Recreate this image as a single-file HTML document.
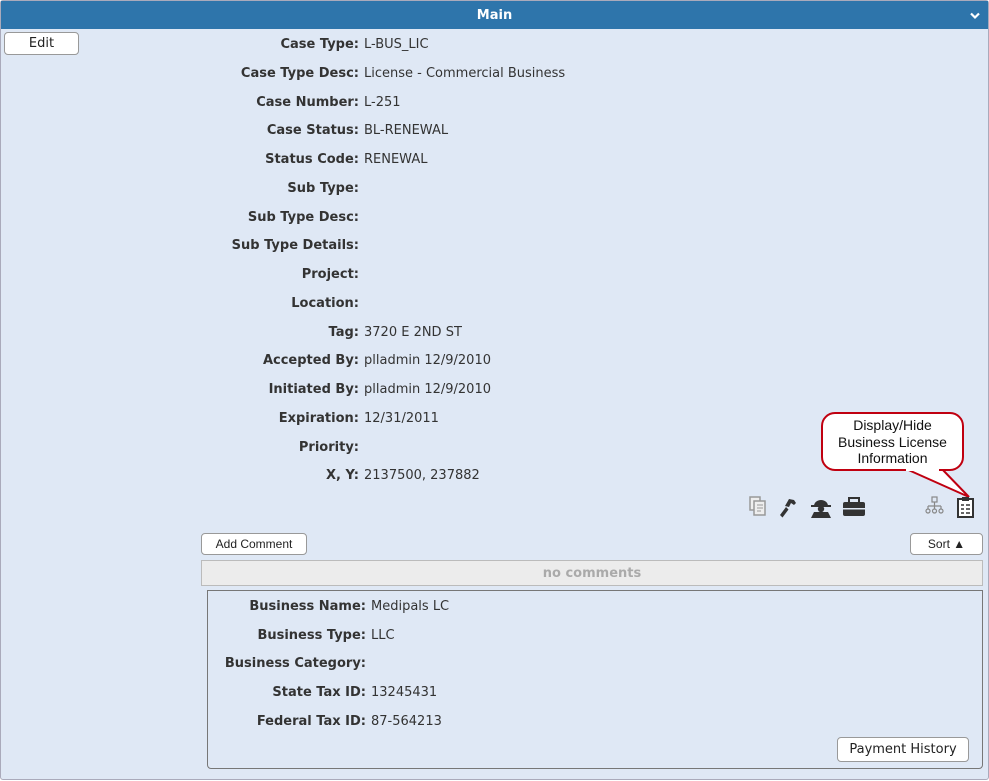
<!DOCTYPE html>
<html><head><style>
*{margin:0;padding:0;box-sizing:border-box}
body{width:989px;height:780px;background:#fff;font-family:"DejaVu Sans","Liberation Sans",sans-serif;font-size:13px;color:#333;position:relative;overflow:hidden}
.frame{position:absolute;left:0;top:0;width:989px;height:780px;background:#dfe8f5;border:1px solid #aab;border-radius:3px}
.hdr{position:absolute;left:1px;top:1px;width:987px;height:28px;background:#2e75ab;color:#fff;font-weight:bold;font-size:13px;text-align:center;line-height:30px}
.btn{position:absolute;background:#fff;border:1px solid #999;border-radius:4px;text-align:center;color:#222}
.f{position:absolute;left:0;height:16px;line-height:16px;white-space:nowrap}
.f b{position:absolute;right:0;white-space:nowrap;color:#333}
.v{position:absolute;white-space:nowrap;height:16px;line-height:16px}
.callout{position:absolute;left:821px;top:412px;width:143px;height:59px;background:#fff;border:2px solid #c00010;border-radius:14px;font-family:"Liberation Sans",sans-serif;font-size:14px;color:#111;text-align:center;line-height:16.5px;padding-top:3px}
.d{position:absolute;left:0;top:1px;width:989px;height:780px}
</style></head><body>
<div class="frame"></div>
<div class="hdr">Main<svg style="position:absolute;right:8px;top:11px" width="10" height="8"><path d="M1 1.5l4 4 4-4" fill="none" stroke="#fff" stroke-width="2.2"/></svg></div>
<div class="btn" style="left:4px;top:32px;width:75px;height:23px;line-height:22px;font-size:13px">Edit</div>

<svg style="position:absolute;left:0;top:0" width="989" height="780">
<polygon points="904,468 941,468 969,497" fill="#fff" stroke="#c00010" stroke-width="2"/>
<g><rect x="750" y="497" width="10" height="13" fill="#eee" stroke="#999" stroke-width="1.5"/><rect x="754" y="501" width="11" height="14" fill="#eee" stroke="#999" stroke-width="1.5"/><path d="M757 505h6M757 508h6M757 511h4" stroke="#999"/></g>
<path d="M780 515l6-8 2.5 2.5-6 8zM785 506l4-7 5 1 2 3-2 2-3-2-2 4z" fill="#333"/>
<g fill="#333"><path d="M814 506a7 6 0 0 1 14 0z"/><rect x="811" y="505" width="20" height="2"/><circle cx="821" cy="509" r="3.2"/><path d="M811 518l3-6h14l3 6z"/></g>
<g fill="#333"><rect x="843" y="502" width="22" height="14" rx="2"/><rect x="849" y="498" width="10" height="5" fill="none" stroke="#333" stroke-width="2"/><rect x="843" y="508" width="22" height="1.5" fill="#dfe8f5"/></g>
<g fill="none" stroke="#888" stroke-width="1.2"><rect x="932" y="497" width="5" height="5"/><path d="M934.5 502v4M928 506h13M928 506v3M934.5 506v3M941 506v3"/><circle cx="928" cy="511" r="2"/><circle cx="934.5" cy="511" r="2"/><circle cx="941" cy="511" r="2"/></g>
<g><rect x="958" y="499" width="15" height="18" fill="#fff" stroke="#333" stroke-width="2"/><rect x="962" y="497" width="7" height="4" fill="#333"/><path d="M961 505h3M966 505h4M961 509h3M966 509h4M961 513h3M966 513h4" stroke="#333" stroke-width="1.5"/></g>
</svg>
<div class="callout">Display/Hide<br>Business License<br>Information</div>
<div style="position:absolute;left:906px;top:467px;width:33px;height:4px;background:#fff"></div>

<div class="btn" style="left:201px;top:533px;width:106px;height:22px;line-height:21px;font-size:12px;font-family:'Liberation Sans',sans-serif">Add Comment</div>
<div class="btn" style="left:910px;top:533px;width:73px;height:22px;line-height:21px;font-size:12px;font-family:'Liberation Sans',sans-serif">Sort &#9650;</div>
<div style="position:absolute;left:201px;top:560px;width:782px;height:26px;background:#ececec;border:1px solid #bbb;text-align:center;line-height:26px;font-weight:bold;color:#aaa;font-size:13px">no comments</div>
<div style="position:absolute;left:207px;top:590px;width:776px;height:179px;border:1px solid #777;border-radius:0 0 4px 4px"></div>
<div class="btn" style="left:837px;top:737px;width:132px;height:25px;line-height:24px;font-size:13px">Payment History</div>

<div class="d">
<div class="f" style="top:36px;width:359px"><b>Case Type:</b></div><div class="v" style="left:364px;top:36px">L-BUS_LIC</div>
<div class="f" style="top:65px;width:359px"><b>Case Type Desc:</b></div><div class="v" style="left:364px;top:65px">License - Commercial Business</div>
<div class="f" style="top:94px;width:359px"><b>Case Number:</b></div><div class="v" style="left:364px;top:94px">L-251</div>
<div class="f" style="top:122px;width:359px"><b>Case Status:</b></div><div class="v" style="left:364px;top:122px">BL-RENEWAL</div>
<div class="f" style="top:151px;width:359px"><b>Status Code:</b></div><div class="v" style="left:364px;top:151px">RENEWAL</div>
<div class="f" style="top:180px;width:359px"><b>Sub Type:</b></div>
<div class="f" style="top:209px;width:359px"><b>Sub Type Desc:</b></div>
<div class="f" style="top:237px;width:359px"><b>Sub Type Details:</b></div>
<div class="f" style="top:266px;width:359px"><b>Project:</b></div>
<div class="f" style="top:295px;width:359px"><b>Location:</b></div>
<div class="f" style="top:324px;width:359px"><b>Tag:</b></div><div class="v" style="left:364px;top:324px">3720 E 2ND ST</div>
<div class="f" style="top:352px;width:359px"><b>Accepted By:</b></div><div class="v" style="left:364px;top:352px">plladmin 12/9/2010</div>
<div class="f" style="top:381px;width:359px"><b>Initiated By:</b></div><div class="v" style="left:364px;top:381px">plladmin 12/9/2010</div>
<div class="f" style="top:410px;width:359px"><b>Expiration:</b></div><div class="v" style="left:364px;top:410px">12/31/2011</div>
<div class="f" style="top:439px;width:359px"><b>Priority:</b></div>
<div class="f" style="top:467px;width:359px"><b>X, Y:</b></div><div class="v" style="left:364px;top:467px">2137500, 237882</div>

<div class="f" style="top:598px;width:366px"><b>Business Name:</b></div><div class="v" style="left:371px;top:598px">Medipals LC</div>
<div class="f" style="top:627px;width:366px"><b>Business Type:</b></div><div class="v" style="left:371px;top:627px">LLC</div>
<div class="f" style="top:655px;width:366px"><b>Business Category:</b></div>
<div class="f" style="top:684px;width:366px"><b>State Tax ID:</b></div><div class="v" style="left:371px;top:684px">13245431</div>
<div class="f" style="top:713px;width:366px"><b>Federal Tax ID:</b></div><div class="v" style="left:371px;top:713px">87-564213</div>
</div>
</body></html>
